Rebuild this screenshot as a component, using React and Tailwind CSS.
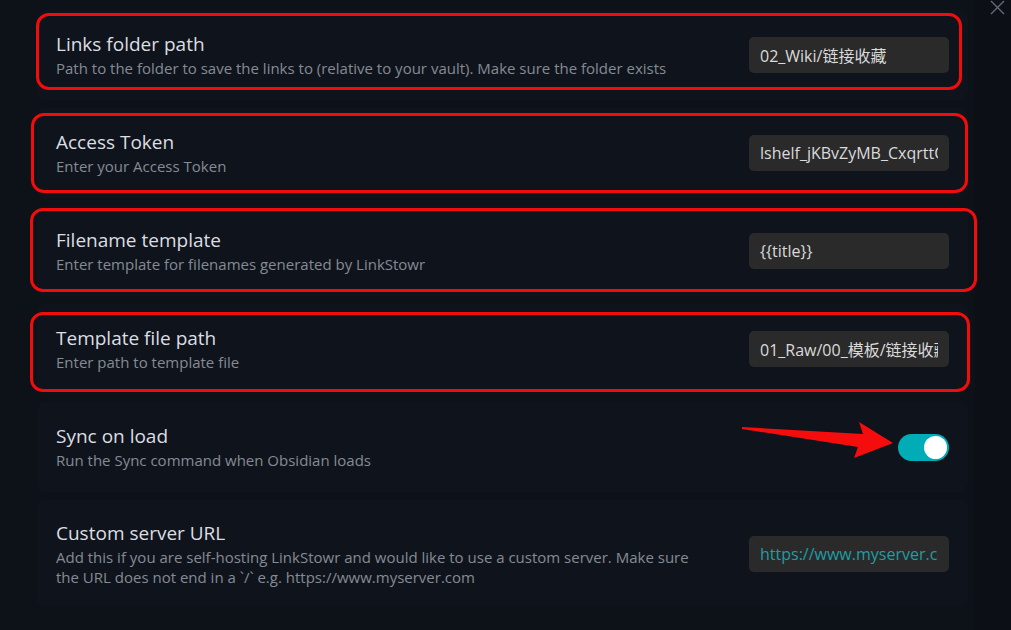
import { useState } from 'react'

const rows = [
    {
        name: 'Links folder path',
        desc: 'Path to the folder to save the links to (relative to your vault). Make sure the folder exists',
        value: '02_Wiki/链接收藏',
        box: 'left-[-1px] right-[6px] top-[3px] bottom-[10px]',
    },
    {
        name: 'Access Token',
        desc: 'Enter your Access Token',
        value: 'lshelf_jKBvZyMB_CxqrttQ2n8w',
        box: 'left-[-6px] right-[0px] top-[5px] bottom-[5px]',
    },
    {
        name: 'Filename template',
        desc: 'Enter template for filenames generated by LinkStowr',
        value: '{{title}}',
        box: 'left-[-7px] right-[-9px] top-[2px] bottom-[4px]',
    },
    {
        name: 'Template file path',
        desc: 'Enter path to template file',
        value: '01_Raw/00_模板/链接收藏模板',
        box: 'left-[-7px] right-[-2px] top-[8px] bottom-[2px]',
    },
]

function Info({ name, children, descClass = '' }) {
    return (
        <div className="flex-1 mr-5">
            <div className="text-[19px] leading-6 font-medium text-[#dcdee2]">{name}</div>
            <div className={`text-[15px] leading-5 text-[#858b94] mt-[2px] ${descClass}`}>{children}</div>
        </div>
    )
}

function TextField({ value, accent }) {
    return (
        <input
            readOnly
            value={value}
            className={`w-[200px] h-9 rounded-[5px] bg-[#2a2a2b] px-[11px] text-[16px] outline-none ${accent ? 'text-[#1f9da3]' : 'text-[#dadada]'}`}
        />
    )
}

export default function App() {
    const [syncOnLoad, setSyncOnLoad] = useState(true)

    return (
        <div
            className="relative w-[1011px] h-[630px] overflow-hidden bg-[#0c1016] flex"
            style={{ fontFamily: '"Open Sans", "Noto Sans CJK SC", sans-serif' }}
        >
            {/* Settings column */}
            <div className="w-[975px] h-full bg-[#0d1118] pl-[37px] pt-[10px] flex flex-col gap-2">
                {rows.map((row) => (
                    <div key={row.name} className="relative w-[931px] h-[90px] rounded-lg bg-[#0f141c] px-[19px] flex items-center">
                        <Info name={row.name}>{row.desc}</Info>
                        <TextField value={row.value} />
                        {/* annotation outline */}
                        <div className={`absolute ${row.box} rounded-[13px] border-[3px] border-[#f20c0c] pointer-events-none`} />
                    </div>
                ))}

                {/* Sync on load */}
                <div className="relative w-[931px] h-[90px] rounded-lg bg-[#0f141c] px-[19px] flex items-center">
                    <Info name="Sync on load">Run the Sync command when Obsidian loads</Info>
                    <button
                        onClick={() => setSyncOnLoad(!syncOnLoad)}
                        className={`w-[51px] h-[27px] rounded-full p-[2px] flex items-center ${syncOnLoad ? 'bg-[#00adb6] justify-end' : 'bg-[#3a3a3a] justify-start'}`}
                    >
                        <span className="block w-[23px] h-[23px] rounded-full bg-white" />
                    </button>
                    <svg className="absolute left-[700px] top-[15px] pointer-events-none" width="160" height="45" viewBox="0 0 160 45">
                        <polygon points="5,10 126,17 122,5 156,26 117,41 121,30 5,12" fill="#f50d0d" />
                    </svg>
                </div>

                {/* Custom server URL */}
                <div className="w-[931px] h-[107px] rounded-lg bg-[#0f141c] px-[19px] flex items-center">
                    <Info name="Custom server URL" descClass="max-w-[650px]">
                        Add this if you are self-hosting LinkStowr and would like to use a custom server. Make sure the URL does not end in a `/` e.g. https://www.myserver.com
                    </Info>
                    <TextField value="https://www.myserver.com" accent />
                </div>
            </div>

            {/* Close */}
            <svg className="absolute left-[990px] top-0" width="15" height="15" viewBox="0 0 15 15">
                <path d="M1 1L14 14M14 1L1 14" stroke="#656a72" strokeWidth="1.4" />
            </svg>
        </div>
    )
}
